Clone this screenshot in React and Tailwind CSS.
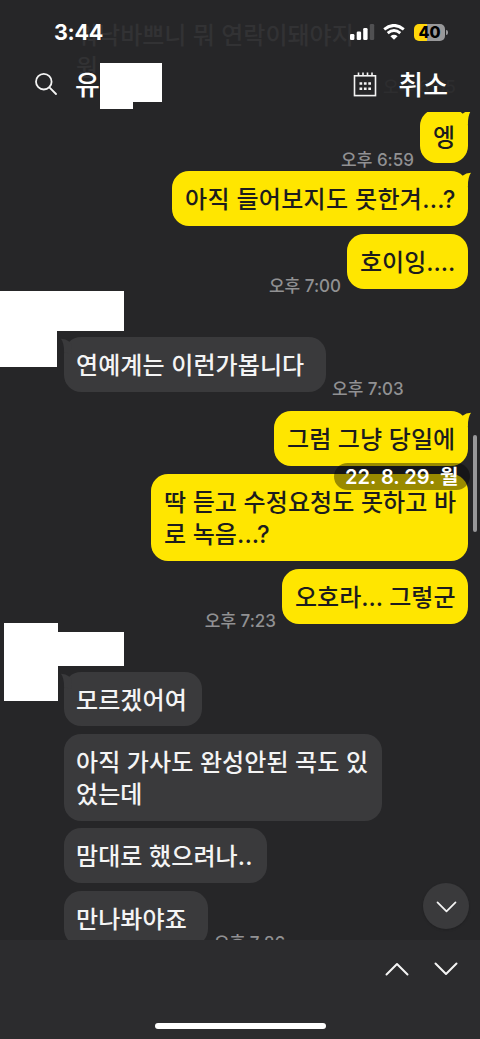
import React from 'react';
import clsx from 'clsx';

// Speech tail drawn over the top outer corner of a bubble
const Tail = ({ mine }) => (
  <svg
    viewBox="0 0 16 20"
    className={clsx(
      'absolute top-0 w-4 h-5',
      mine ? '-right-[3px] text-[#ffe600]' : '-left-[3px] -scale-x-100 text-[#3a3a3c]'
    )}
  >
    <path d="M5 8 L7.6 4.8 Q11 1.9 16 1.8 Q12.9 6 12.9 15 L6 17 Z" fill="currentColor" />
  </svg>
);

const Time = ({ children }) => (
  <span className="text-[17px] leading-5 text-[#919193] whitespace-nowrap -mb-[7px] shrink-0">{children}</span>
);

function Message({ mine, tail, time, size, lines }) {
  return (
    <div className={clsx('flex items-end gap-[6px]', mine && 'flex-row-reverse')}>
      <div
        className={clsx(
          'relative shrink-0 rounded-[17px] pt-[13px] text-2xl leading-8 whitespace-nowrap',
          mine ? 'bg-[#ffe600] text-[#1c1c1e] px-[13px]' : 'bg-[#3a3a3c] text-[#f4f4f4] px-3 tracking-[0.1px]',
          size
        )}
      >
        {tail && <Tail mine={mine} />}
        {lines.map((line) => (
          <div key={line}>{line}</div>
        ))}
      </div>
      {time && <Time>{time}</Time>}
    </div>
  );
}

const Chevron = ({ up, className }) => (
  <svg viewBox="0 0 24 14" className={clsx(className, up && 'rotate-180')} fill="none" stroke="#f4f4f4" strokeWidth="2" strokeLinecap="round" strokeLinejoin="round">
    <path d="M1.5 1.5 L12 12 L22.5 1.5" />
  </svg>
);

function StatusBar() {
  return (
    <div className="relative flex items-center h-[64px] pl-[54px] pr-[32px]">
      <span className="text-[21.5px] leading-6 font-bold text-white tracking-[-0.3px]">3:44</span>
      <div className="ml-auto flex items-center">
        <svg viewBox="0 0 25 16" className="w-[25px] h-4" fill="#fff">
          <rect x="0" y="10" width="4.4" height="6" rx="1.3" />
          <rect x="6.7" y="7.5" width="4.4" height="8.5" rx="1.3" />
          <rect x="13.2" y="4" width="4.4" height="12" rx="1.3" />
          <rect x="19.8" y="0" width="4.4" height="16" rx="1.3" fill="#505052" />
        </svg>
        <svg viewBox="0 0 22 16" className="w-[22px] h-4 ml-2" fill="none" stroke="#fff" strokeWidth="2.9">
          <path d="M1.2 5.3 Q11 -2.5 20.8 5.3" />
          <path d="M4.7 9.2 Q11 4 17.3 9.2" />
          <path d="M11 15.7 L7.4 12.2 Q11 9.4 14.6 12.2 Z" fill="#fff" stroke="none" />
        </svg>
        <div className="ml-[9px] w-[31px] h-[17px] rounded-[5px] flex items-center justify-center bg-[linear-gradient(90deg,#ffd60a_41%,#98989a_41%)]">
          <span className="text-[16px] leading-[17px] font-extrabold text-black">40</span>
        </div>
        <div className="ml-px w-[2px] h-[5px] rounded-r-full bg-[#98989a]" />
      </div>
    </div>
  );
}

function Header() {
  return (
    <header className="relative h-[112px] shrink-0 overflow-hidden bg-[#262628]">
      {/* Earlier message faintly showing through the bar */}
      <div className="absolute left-[76px] top-[20px] text-2xl leading-8 text-[#323234] whitespace-nowrap">
        <div>워낙바쁘니 뭐 연락이돼야지</div>
        <div>원</div>
      </div>
      <span className="absolute left-[383px] top-[77px] text-[17px] leading-5 text-[#2d2d2f]">오후 6:55</span>
      <StatusBar />
      <div className="relative flex h-[45px] pl-[35px] pr-[32px]">
        <svg viewBox="0 0 22 22" className="w-[22px] h-[22px] mt-[9px]" fill="none" stroke="#f4f4f4" strokeWidth="1.8" strokeLinecap="round">
          <circle cx="8.8" cy="8.7" r="7.8" />
          <path d="M14.4 14.3 L21 21" />
        </svg>
        <span className="ml-[18px] w-[25px] pt-[2px] text-[27px] leading-10 text-white whitespace-nowrap">유</span>
        <div>
          <div className="-mt-px w-[62px] h-[39px] bg-white" />
          <div className="w-[33px] h-[7px] bg-white" />
        </div>
        <svg viewBox="0 0 24 25" className="w-6 h-[25px] mt-[8px] ml-auto" fill="none" stroke="#f4f4f4" strokeWidth="1.6">
          <rect x="1.5" y="3.8" width="21" height="19.8" />
          <path d="M5.5 0.5 V4 M10 0.5 V4 M14.5 0.5 V4 M19 0.5 V4" />
          <path d="M6.5 11.5 H18 M6.5 16.7 H18" strokeWidth="2.6" strokeDasharray="2.7 1.7" />
        </svg>
        <span className="ml-[21px] pt-[2px] text-[27px] leading-10 text-white">취소</span>
      </div>
    </header>
  );
}

function Conversation() {
  return (
    <main className="h-[828px] shrink-0 overflow-hidden pr-3">
      <div className="-mt-[3px] flex flex-col gap-2">
        <Message mine tail time="오후 6:59" size="w-12 h-[54px]" lines={['엥']} />
        <Message mine tail size="w-[296px] h-[55px] tracking-[0.3px]" lines={['아직 들어보지도 못한겨...?']} />
        <Message mine time="오후 7:00" size="w-[121px] h-[55px]" lines={['호이잉....']} />
      </div>

      <section className="mt-[2px] flex">
        <div className="w-[57px] h-[76px] shrink-0 bg-white" />
        <div>
          <div className="w-[67px] h-10 bg-white" />
          <div className="mt-[6px] ml-[7px]">
            <Message tail time="오후 7:03" size="w-[262px] h-[55px]" lines={['연예계는 이런가봅니다']} />
          </div>
        </div>
      </section>

      <div className="mt-[19px] flex flex-col gap-2">
        <Message mine tail size="w-[194px] h-[55px] tracking-[0.1px]" lines={['그럼 그냥 당일에']} />
        <Message mine size="w-[317px] h-[87px] tracking-[0.1px]" lines={['딱 듣고 수정요청도 못하고 바', '로 녹음...?']} />
        <Message mine time="오후 7:23" size="w-[186px] h-[55px]" lines={['오호라... 그렇군']} />
      </div>

      <section className="-mt-px flex pl-1">
        <div className="w-[54px] h-[78px] shrink-0 bg-white" />
        <div className="pt-[9px]">
          <div className="w-[66px] h-[34px] bg-white" />
          <div className="mt-[6px] ml-[6px] flex flex-col gap-[7.5px]">
            <Message tail size="w-[138px] h-[54px]" lines={['모르겠어여']} />
            <Message size="w-[318px] h-[87px]" lines={['아직 가사도 완성안된 곡도 있', '었는데']} />
            <Message size="w-[203px] h-[55px]" lines={['맘대로 했으려나..']} />
            <Message time="오후 7:26" size="w-[144px] h-[55px]" lines={['만나봐야죠']} />
          </div>
        </div>
      </section>
    </main>
  );
}

export default function App() {
  return (
    <div className="relative w-[480px] h-[1039px] overflow-hidden flex flex-col bg-[#262628] font-medium font-['Inter','Noto_Sans_CJK_KR',sans-serif]">
      <Header />
      <Conversation />

      {/* Date pill, scroll thumb and jump button float above the messages */}
      <div className="absolute left-[334px] top-[463px] w-[136px] h-[27px] rounded-full bg-black/40 pl-[11px] text-[20px] leading-[28px] font-semibold text-white whitespace-nowrap">
        22. 8. 29. 월
      </div>
      <div className="absolute left-[472.5px] top-[435px] w-[4px] h-[97px] rounded-full bg-[#98989a]" />
      <button className="absolute left-[423px] top-[883px] w-[46px] h-[46px] rounded-full bg-[#3a3a3c] shadow flex items-center justify-center">
        <Chevron className="w-[21px] h-3 mt-[2px]" />
      </button>

      <footer className="flex-1 flex flex-col bg-[#2c2c2e]">
        <div className="flex justify-end gap-[25px] pt-[22px] pr-[22px]">
          <Chevron up className="w-6 h-[14px]" />
          <Chevron className="w-6 h-[14px]" />
        </div>
        <div className="mt-auto mb-[10px] mx-auto w-[171px] h-[6px] rounded-full bg-white" />
      </footer>
    </div>
  );
}
